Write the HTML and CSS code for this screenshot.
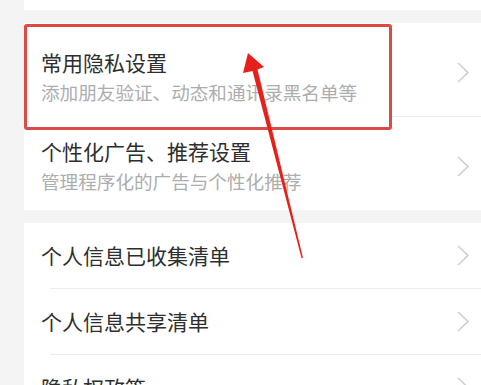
FILE: index.html
```html
<!DOCTYPE html>
<html lang="zh-CN">
<head>
<meta charset="utf-8">
<link rel="stylesheet" href="styles.css">
</head>
<body>
<div class="page">
  <div class="card card-top"></div>
  <div class="card">
    <div class="item item-tall">
      <div class="texts texts-first">
        <div class="title">常用隐私设置</div>
        <div class="sub">添加朋友验证、动态和通讯录黑名单等</div>
      </div>
      <span class="chev"><svg width="12" height="21" viewBox="0 0 12 21"><path d="M1 1 L11 10.5 L1 20" fill="none" stroke="#cfcfcf" stroke-width="1.6"/></svg></span>
    </div>
    <div class="sep sep-first"></div>
    <div class="item item-tall">
      <div class="texts texts-second">
        <div class="title">个性化广告、推荐设置</div>
        <div class="sub">管理程序化的广告与个性化推荐</div>
      </div>
      <span class="chev"><svg width="12" height="21" viewBox="0 0 12 21"><path d="M1 1 L11 10.5 L1 20" fill="none" stroke="#cfcfcf" stroke-width="1.6"/></svg></span>
    </div>
  </div>
  <div class="card">
    <div class="item item-short">
      <div class="title">个人信息已收集清单</div>
      <span class="chev"><svg width="12" height="21" viewBox="0 0 12 21"><path d="M1 1 L11 10.5 L1 20" fill="none" stroke="#cfcfcf" stroke-width="1.6"/></svg></span>
    </div>
    <div class="sep"></div>
    <div class="item item-short">
      <div class="title">个人信息共享清单</div>
      <span class="chev"><svg width="12" height="21" viewBox="0 0 12 21"><path d="M1 1 L11 10.5 L1 20" fill="none" stroke="#cfcfcf" stroke-width="1.6"/></svg></span>
    </div>
    <div class="sep"></div>
    <div class="item item-short">
      <div class="title">隐私权政策</div>
      <span class="chev"><svg width="12" height="21" viewBox="0 0 12 21"><path d="M1 1 L11 10.5 L1 20" fill="none" stroke="#cfcfcf" stroke-width="1.6"/></svg></span>
    </div>
  </div>
</div>
<div class="mark-box"></div>
<svg class="mark-arrow" width="481" height="385" viewBox="0 0 481 385">
  <polygon points="248,53 264,67 257.5,69.5 303,258 301.5,258 252.5,71 243,73" fill="#e8201c"/>
</svg>
</body>
</html>
```

FILE: styles.css
```css
html, body {
  margin: 0;
  padding: 0;
}
body {
  width: 481px;
  height: 385px;
  overflow: hidden;
  background: #f4f4f4;
  font-family: "Noto Sans CJK SC", "Noto Sans", sans-serif;
  position: relative;
}
.page {
  padding-left: 24px;
  display: flex;
  flex-direction: column;
  gap: 13px;
}
.card {
  background: #ffffff;
  display: flex;
  flex-direction: column;
}
.card-top {
  height: 10px;
}
.item {
  display: flex;
  align-items: center;
  justify-content: space-between;
  padding-left: 17px;
  padding-right: 12px;
}
.item-tall {
  height: 93px;
}
.item-short {
  height: 65px;
}
.texts {
  display: flex;
  flex-direction: column;
}
.texts-first {
  margin-top: 15px;
}
.texts-second {
  margin-top: 5px;
}
.title {
  font-size: 21px;
  line-height: 29px;
  color: #2e2e2e;
  white-space: nowrap;
}
.sub {
  font-size: 18.6px;
  line-height: 30px;
  color: #adadad;
  white-space: nowrap;
}
.chev {
  display: flex;
  margin-top: 6px;
}
.item-short .chev {
  margin-top: 0;
}
.sep {
  height: 1px;
  background: #ececec;
  margin-left: 26px;
}
.sep-first {
  margin-left: 368px;
}
.mark-box {
  position: absolute;
  left: 24px;
  top: 24px;
  width: 362px;
  height: 100px;
  border: 3px solid #dc4a46;
  border-radius: 3px;
}
.mark-arrow {
  position: absolute;
  left: 0;
  top: 0;
}
```
